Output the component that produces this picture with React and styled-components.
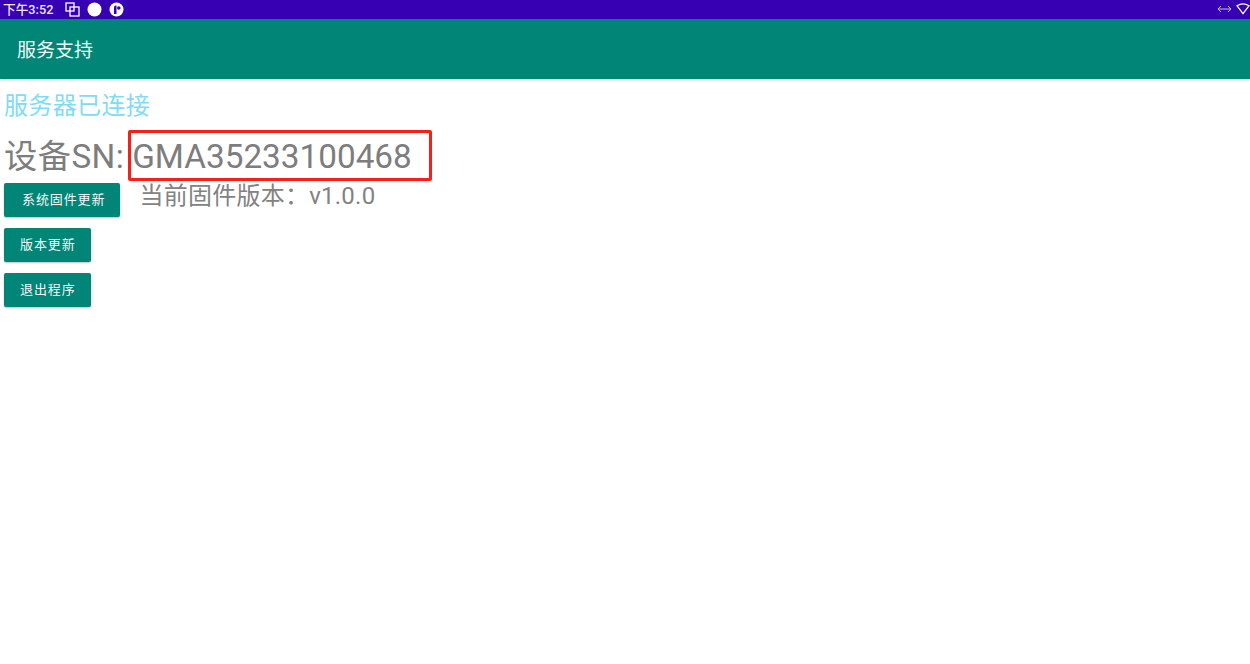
import React from 'react';
import styled, { createGlobalStyle } from 'styled-components';

const GlobalStyle = createGlobalStyle`
  html, body {
    margin: 0;
    padding: 0;
    background: #fff;
    font-family: Roboto, "Noto Sans CJK SC", sans-serif;
  }
`;

const Page = styled.div`
  width: 1250px;
  height: 664px;
  overflow: hidden;
  position: relative;
  background: #fff;
`;

const StatusBar = styled.div`
  height: 18px;
  padding: 0 0 1px 3px;
  display: flex;
  align-items: center;
  background: #3700b3;
  color: #fff;
`;

const Clock = styled.span`
  font-size: 12.7px;
  font-weight: 500;
  width: 62px;
  padding-bottom: 2px;
  white-space: nowrap;
  color: #ece6fa;
`;

const StatusIcons = styled.div`
  display: flex;
  align-items: center;
  gap: 7px;
`;

const StatusRight = styled.div`
  margin-left: auto;
  display: flex;
  align-items: center;
  gap: 4px;
`;

const AppBar = styled.div`
  height: 58px;
  padding: 0 0 2px 17px;
  display: flex;
  align-items: center;
  background: #008577;
  color: #f2f8f7;
  font-size: 19px;
  box-shadow: 0 1px 2px rgba(0, 0, 0, 0.2);
`;

const Content = styled.div`
  padding: 11px 0 0 4px;
`;

const ServerStatus = styled.div`
  font-size: 24px;
  letter-spacing: 0.35px;
  line-height: 32px;
  color: #7fdcf7;
`;

const SnLine = styled.div`
  margin: 14px 0 4px;
  font-size: 33.3px;
  line-height: 42px;
  color: #7d7d7d;
  white-space: nowrap;
`;

const SnLabel = styled.span`
  letter-spacing: 0.4px;
`;

const SnValue = styled.span`
  margin-left: 8px;
`;

const Row = styled.div`
  display: flex;
  align-items: flex-start;
`;

const Buttons = styled.div`
  display: flex;
  flex-direction: column;
  align-items: flex-start;
  gap: 11px;
  padding-top: 1px;
`;

const ActionButton = styled.button`
  height: 34px;
  padding: 0 15px 4px ${(p) => (p.$wide ? '18px' : '16px')};
  border: 0;
  border-radius: 2px;
  background: #008577;
  color: #f2f8f7;
  font-family: inherit;
  font-size: 13px;
  letter-spacing: 0.9px;
  white-space: nowrap;
  box-shadow: 0 1px 2px rgba(0, 0, 0, 0.25);
`;

const Version = styled.div`
  margin-left: 19px;
  font-size: 24px;
  letter-spacing: 0.25px;
  line-height: 28px;
  color: #828282;
  white-space: nowrap;
`;

const Highlight = styled.div`
  position: absolute;
  left: 128px;
  top: 130px;
  width: 304px;
  height: 51px;
  box-sizing: border-box;
  border: 3px solid #f5201c;
  border-radius: 2px;
`;

function App() {
  return (
    <Page>
      <GlobalStyle />
      <StatusBar>
        <Clock>下午3:52</Clock>
        <StatusIcons>
          <svg width="15" height="15" viewBox="0 0 15 15" fill="none" stroke="#fff" strokeWidth="1.3">
            <rect x="1" y="1" width="8" height="8" />
            <rect x="5" y="5" width="9" height="9" />
          </svg>
          <svg width="15" height="15" viewBox="0 0 15 15">
            <circle cx="7.5" cy="7.5" r="7" fill="#fff" />
          </svg>
          <svg width="15" height="15" viewBox="0 0 15 15">
            <circle cx="7.5" cy="7.5" r="7" fill="#fff" />
            <path d="M5 12V5.5C5 4 6.2 3.5 7.5 3.5V12z" fill="#3700b3" />
            <circle cx="9.8" cy="6" r="1.8" fill="#3700b3" />
          </svg>
        </StatusIcons>
        <StatusRight>
          <svg width="15" height="10" viewBox="0 0 15 10" fill="none" stroke="#c9bdf0" strokeWidth="1">
            <path d="M1 5h13M4 2L1 5l3 3M11 2l3 3-3 3" />
          </svg>
          <svg width="14" height="12" viewBox="0 0 15 12" fill="none" stroke="#fff" strokeWidth="1.3">
            <path d="M1 2.5C5 0 10 0 14 2.5L7.5 11z" />
          </svg>
        </StatusRight>
      </StatusBar>
      <AppBar>服务支持</AppBar>
      <Content>
        <ServerStatus>服务器已连接</ServerStatus>
        <SnLine>
          <SnLabel>设备SN:</SnLabel>
          <SnValue>GMA35233100468</SnValue>
        </SnLine>
        <Row>
          <Buttons>
            <ActionButton $wide>系统固件更新</ActionButton>
            <ActionButton>版本更新</ActionButton>
            <ActionButton>退出程序</ActionButton>
          </Buttons>
          <Version>当前固件版本{'\uFF1A'}v1.0.0</Version>
        </Row>
      </Content>
      <Highlight />
    </Page>
  );
}

export default App;
